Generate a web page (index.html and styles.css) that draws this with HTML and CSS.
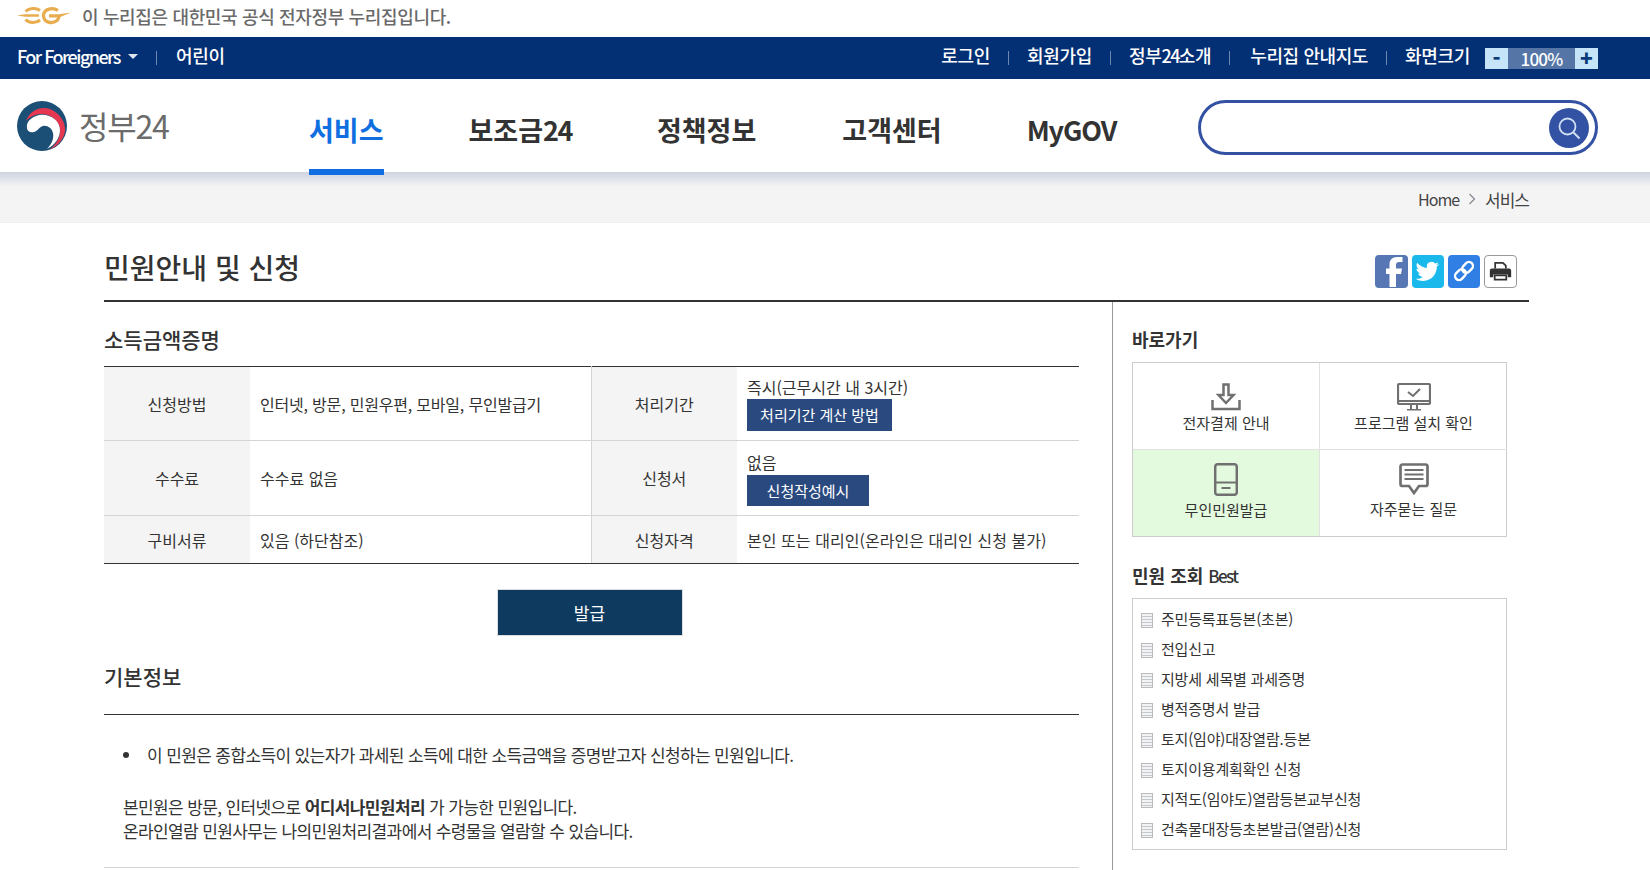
FILE: index.html
```html
<!DOCTYPE html>
<html lang="ko">
<head>
<meta charset="utf-8">
<title>정부24</title>
<link rel="stylesheet" href="styles.css">
</head>
<body>
<div class="gov-bar">
  <svg class="eg" viewBox="0 0 54 18" width="54" height="18"><path d="M0 8.500l8-1.300h14v2.600H8z" fill="#e9ac4e"/><path d="M23 3.500C19 .5 12 1 8.500 4.500M8.500 12.500C12 16.500 19 16.500 23 13" fill="none" stroke="#e9ac4e" stroke-width="3"/><path d="M41 3.500C36 .2 27 1.500 26.500 8.500 26.500 15.500 35 17.500 40 13.500 41.500 12 42 10.500 42 9" fill="none" stroke="#e9ac4e" stroke-width="3.200"/><path d="M32 7.300h10L54 5.500 42 10.500H32z" fill="#e9ac4e"/></svg>
  <span>이 누리집은 대한민국 공식 전자정부 누리집입니다.</span>
</div>
<div class="util-bar">
  <div class="util-left">
    <a class="foreign">For Foreigners<i class="caret"></i></a>
    <i class="sep sep-wide"></i>
    <a>어린이</a>
  </div>
  <div class="util-right">
    <a>로그인</a><i class="sep"></i>
    <a>회원가입</a><i class="sep"></i>
    <a>정부<span class="tight">24</span>소개</a><i class="sep sep-map"></i>
    <a>누리집 안내지도</a><i class="sep"></i>
    <a>화면크기</a>
    <div class="zoom-ctl"><b>-</b><span>100%</span><b>+</b></div>
  </div>
</div>
<header class="head">
  <div class="logo">
    <svg viewBox="0 0 50 50" width="50" height="50">
      <circle cx="25" cy="25" r="25" fill="#1b4f75"/>
      <path d="M9 20C13 9 24 5 33 8c10 4 16 14 15 22-1 8-7 15-16 19 8-6 12-14 11-21C41 17 31 12 23 13c-7 1-11 4-14 7z" fill="#e5374f"/>
      <path d="M10 27c-1-6 4-11 12-13 10-2 21 5 21 15 0 8-5 15-13 19 5-5 7-11 6-16-1-5-6-8-10-7-4 1-5 5-9 6-4 1-7-1-7-4z" fill="#fff"/>
    </svg>
    <span>정부24</span>
  </div>
  <nav class="gnb">
    <a class="on">서비스</a>
    <a>보조금<span class="n24">24</span></a>
    <a>정책정보</a>
    <a class="cs">고객센터</a>
    <a class="en">MyGOV</a>
  </nav>
  <div class="search">
    <span class="search-btn">
      <svg viewBox="0 0 24 24" width="24" height="24"><circle cx="10.500" cy="10.500" r="8" fill="none" stroke="#cfe0f5" stroke-width="1.800"/><path d="M16.500 16.500l6 6" stroke="#cfe0f5" stroke-width="2"/></svg>
    </span>
  </div>
</header>
<div class="crumb">
  <span>Home</span>
  <svg viewBox="0 0 8 12" width="8" height="12"><path d="M1.500 1l5 5-5 5" fill="none" stroke="#8a8590" stroke-width="1.200"/></svg>
  <span class="crumb-now">서비스</span>
</div>
<main class="page">
  <div class="title-row">
    <h1>민원안내 및 신청</h1>
    <div class="share">
      <span class="sq fb"><svg viewBox="0 0 32 32" width="32" height="32"><path d="M21 32V19h5l1-5.500h-6V10c0-2 1-3 3-3h3.500V2h-5c-5.500 0-8 3-8 7.500v4H11V19h3.500v13z" fill="#fff"/></svg></span>
      <span class="sq tw"><svg viewBox="0 0 32 32" width="32" height="32"><path d="M27 9.200c-.9.400-1.800.6-2.800.8 1-.6 1.800-1.500 2.100-2.700-.9.600-2 1-3 1.200a4.800 4.800 0 0 0-8.300 4.400C11.100 12.700 7.500 10.800 5.200 7.800c-1.300 2.200-.6 5 1.500 6.400-.8 0-1.500-.2-2.200-.6 0 2.300 1.700 4.300 3.900 4.800-.7.200-1.500.2-2.200.1.600 2 2.400 3.300 4.500 3.400-2 1.500-4.500 2.200-7 1.900 2.200 1.400 4.700 2.200 7.400 2.200 9 0 14-7.600 13.700-14.400 1-.7 1.800-1.500 2.400-2.400z" fill="#fff"/></svg></span>
      <span class="sq lk"><svg viewBox="0 0 32 32" width="32" height="32"><g fill="none" stroke="#fff" stroke-width="2.400" transform="rotate(-45 16 16)"><rect x="5" y="12" width="12" height="8" rx="4"/><rect x="15" y="12" width="12" height="8" rx="4"/></g></svg></span>
      <span class="sq pr"><svg viewBox="0 0 32 32" width="31" height="31"><path d="M10.500 13V7h8l3 3v3" fill="none" stroke="#333" stroke-width="1.800"/><path d="M7 13h18a2 2 0 0 1 2 2v7h-3.500v-3h-15v3H5v-7a2 2 0 0 1 2-2z" fill="#333"/><path d="M10 20h12v4.500H10z" fill="none" stroke="#333" stroke-width="1.800"/></svg></span>
    </div>
  </div>
  <div class="cols">
    <section class="content">
      <h2>소득금액증명</h2>
      <table class="info">
        <tr class="r1">
          <th>신청방법</th><td class="w1 narrow">인터넷, 방문, 민원우편, 모바일, 무인발급기</td>
          <th class="th2">처리기간</th><td>즉시(근무시간 내 3시간)<a class="mini m1">처리기간 계산 방법</a></td>
        </tr>
        <tr class="r2">
          <th>수수료</th><td class="w1">수수료 없음</td>
          <th class="th2">신청서</th><td>없음<a class="mini m2">신청작성예시</a></td>
        </tr>
        <tr class="r3">
          <th>구비서류</th><td class="w1">있음 (하단참조)</td>
          <th class="th2">신청자격</th><td class="wide">본인 또는 대리인(온라인은 대리인 신청 불가)</td>
        </tr>
      </table>
      <div class="issue-wrap"><a class="issue">발급</a></div>
      <h2 class="h-basic">기본정보</h2>
      <div class="basic">
        <ul><li>이 민원은 종합소득이 있는자가 과세된 소득에 대한 소득금액을 증명받고자 신청하는 민원입니다.</li></ul>
        <p>본민원은 방문, 인터넷으로 <b>어디서나민원처리</b> 가 가능한 민원입니다.<br>온라인열람 민원사무는 나의민원처리결과에서 수령물을 열람할 수 있습니다.</p>
      </div>
    </section>
    <aside class="side">
      <h3>바로가기</h3>
      <div class="quick">
        <a>
          <svg viewBox="0 0 30 28" width="30" height="28"><path d="M12.500 1.500h5V12h5L15 20 7.500 12h5zM1.500 17v9h27v-9" fill="none" stroke="#707070" stroke-width="2.500"/></svg>
          <span>전자결제 안내</span>
        </a>
        <a>
          <svg viewBox="0 0 34 28" width="34" height="28"><rect x="1" y="1" width="32" height="20" rx="1.500" fill="none" stroke="#707070" stroke-width="2.200"/><path d="M1 18h32M11 9l5 4 7-7" fill="none" stroke="#707070" stroke-width="2"/><path d="M13 21h2v5h4v-5h2v5h3v1.500H10V26h3z" fill="#707070"/></svg>
          <span>프로그램 설치 확인</span>
        </a>
        <a class="green">
          <svg viewBox="0 0 24 33" width="24" height="33"><rect x="1.200" y="1.200" width="21.600" height="30.600" rx="2.500" fill="none" stroke="#707070" stroke-width="2.500"/><path d="M1.200 19.500h21.600M7.500 25h9" fill="none" stroke="#707070" stroke-width="2.200"/></svg>
          <span>무인민원발급</span>
        </a>
        <a>
          <svg viewBox="0 0 30 32" width="30" height="32"><path d="M3.500 1.500h23a2 2 0 0 1 2 2V21a2 2 0 0 1-2 2H20l-5 7-5-7H3.500a2 2 0 0 1-2-2V3.500a2 2 0 0 1 2-2z" fill="none" stroke="#707070" stroke-width="2.700"/><path d="M5.500 7h19M5.500 11.500h19M5.500 16h19" stroke="#707070" stroke-width="2.200"/></svg>
          <span>자주묻는 질문</span>
        </a>
      </div>
      <h3 class="h-best">민원 조회 <em>Best</em></h3>
      <ul class="best">
        <li>주민등록표등본(초본)</li>
        <li>전입신고</li>
        <li>지방세 세목별 과세증명</li>
        <li>병적증명서 발급</li>
        <li>토지(임야)대장열람.등본</li>
        <li>토지이용계획확인 신청</li>
        <li>지적도(임야도)열람등본교부신청</li>
        <li>건축물대장등초본발급(열람)신청</li>
      </ul>
    </aside>
  </div>
</main>
</body>
</html>
```
FILE: styles.css
```css
* { box-sizing: border-box; }
html, body { margin: 0; padding: 0; height: 870px; overflow: hidden; background: #fff; }
body { font-family: "Noto Sans CJK KR", "Noto Sans", sans-serif; color: #333; font-size: 16px; }
h1, h2, h3, ul, p { margin: 0; padding: 0; }
i, em { font-style: normal; }

.gov-bar { height: 37px; display: flex; align-items: center; padding: 0 0 5px 17px; gap: 11px; font-size: 18px; color: #6a6a6a; font-weight: 500; }
.gov-bar span { letter-spacing: -.35px; }
.eg { flex: none; }

.util-bar { height: 42px; background: #033074; color: #fff; display: flex; justify-content: space-between; align-items: center; padding: 0 52px 0 17px; font-size: 18px; font-weight: 500; }
.util-left, .util-right { display: flex; align-items: center; }
.util-left a, .util-right a { position: relative; top: -3px; letter-spacing: -.3px; }
.foreign { font-size: 18px; letter-spacing: -1.55px !important; display: flex; align-items: center; top: -2px !important; }
.tight { letter-spacing: -1.6px; }
.caret { width: 0; height: 0; border-left: 5px solid transparent; border-right: 5px solid transparent; border-top: 5px solid #dfe5f0; margin-left: 8px; }
.sep { width: 1px; height: 14px; background: #6f88ad; margin: 0 18px; }
.sep-wide { margin: 0 19px 0 18px; }
.sep-map { margin-right: 20px; }
.zoom-ctl { display: flex; height: 21px; margin-left: 15px; width: 113px; font-weight: 700; }
.zoom-ctl b { width: 23px; background: #c5e4f8; color: #0b3a78; text-align: center; font-size: 21px; line-height: 19px; }
.zoom-ctl span { flex: 1; background: #5475a5; text-align: center; font-size: 17px; font-weight: 500; line-height: 21px; letter-spacing: -.8px; }
.util-right a:nth-of-type(4) { letter-spacing: -.42px; }

.head { height: 93px; display: flex; position: relative; align-items: center; background: #fff; padding-left: 17px; z-index: 1; }
.logo { display: flex; align-items: center; width: 292px; gap: 12px; color: #6b6b6b; font-size: 32px; }
.logo span { letter-spacing: -1.2px; position: relative; top: -1px; }
.gnb { display: flex; gap: 85px; font-size: 27px; font-weight: 700; color: #333; margin-top: 7px; }
.gnb a { position: relative; white-space: nowrap; }
.gnb a.on { color: #0f6fe0; }
.gnb a.on::after { content: ""; position: absolute; left: 0; right: 0; bottom: -26px; height: 6px; background: #0f6fe0; }
.n24 { letter-spacing: -1.5px; }
.cs { margin-left: 1px; }
.en { letter-spacing: -1.1px; }
.search { position: absolute; left: 1198px; top: 21px; width: 400px; height: 55px; border: 3px solid #3452a4; border-radius: 28px; display: flex; align-items: center; justify-content: flex-end; padding-right: 6px; }
.search-btn { width: 40px; height: 40px; border-radius: 50%; background: #3452a4; display: flex; align-items: center; justify-content: center; }

.crumb { height: 51px; background: linear-gradient(#cdd3e0, #f5f4f5 15px); border-bottom: 1px solid #efefef; display: flex; align-items: center; justify-content: flex-end; padding: 4px 121px 0 0; gap: 9px; font-size: 16px; color: #444; }
.crumb span { letter-spacing: -1px; }
.crumb-now { font-size: 17px; }

.page { width: 1425px; margin-left: 104px; }
.title-row { height: 79px; display: flex; justify-content: space-between; border-bottom: 2px solid #333; padding-top: 23px; }
h1 { font-size: 28px; font-weight: 500; line-height: 44px; color: #333; margin-top: -1px; }
.share { display: flex; gap: 4px; padding: 9px 12px 0 0; }
.sq { width: 33px; height: 33px; border-radius: 4px; display: block; }
.sq svg { display: block; }
.fb { background: #5776b4; }
.tw { background: #1bb8ec; width: 32px; }
.lk { background: #2f7fe4; width: 32px; }
.pr { border: 1px solid #999; background: #fff; }

.cols { display: flex; }
.content { width: 1009px; padding-right: 33px; border-right: 1px solid #999; height: 568px; }
h2 { font-size: 21px; font-weight: 500; color: #333; line-height: 30px; margin-top: 22px; }
.info { width: 975px; border-collapse: collapse; margin-top: 12px; border-top: 1px solid #333; border-bottom: 1px solid #333; table-layout: fixed; }
.info th, .info td { font-weight: 400; font-size: 16px; line-height: 22px; padding: 0; vertical-align: middle; border-bottom: 1px solid #d4d4d4; color: #333; }
.info tr:last-child th, .info tr:last-child td { border-bottom: 1px solid #333; }
.info th { width: 146px; background: #f4f4f4; text-align: center; }
.info td { padding-left: 10px; }
.info .w1 { width: 341px; padding-left: 10px; }
.info .narrow { letter-spacing: -.2px; }
.info .wide { letter-spacing: .05px; }
.info .th2 { border-left: 1px solid #d4d4d4; }
.r1 { height: 74px; }
.r2 { height: 75px; }
.r3 { height: 48px; }
.mini { display: block; background: #2a4a7f; color: #fff; font-size: 15px; text-align: center; height: 32px; line-height: 31px; }
.m1 { width: 145px; margin-top: 1px; }
.m2 { width: 122px; height: 31px; margin-top: 2px; }

.issue-wrap { display: flex; justify-content: center; margin-top: 25px; padding-right: 4px; }
.issue { width: 186px; height: 47px; background: #0f3a60; border: 1px solid #ddd; color: #fff; display: flex; align-items: center; justify-content: center; font-size: 17px; }
.h-basic { margin-top: 25px; }
.basic { margin-top: 23px; border-top: 1px solid #333; border-bottom: 1px solid #d4d4d4; height: 154px; padding: 28px 0 0 19px; font-size: 17px; line-height: 24px; color: #333; letter-spacing: -.62px; }
.basic ul { padding-left: 24px; margin-bottom: 28px; list-style: none; }
.basic li { position: relative; }
.basic li::before { content: ""; position: absolute; left: -24px; top: 9px; width: 6px; height: 6px; border-radius: 50%; background: #333; }
.basic b { font-weight: 700; }

.side { padding: 22px 0 0 19px; width: 395px; }
h3 { font-size: 18px; font-weight: 700; line-height: 30px; color: #333; }
h3 em { font-weight: 500; font-size: 17px; letter-spacing: -1.6px; }
.quick { display: grid; grid-template-columns: 187px 187px; grid-template-rows: 87px 86px; margin-top: 8px; width: 375px; border: 1px solid #ccc; }
.quick a { display: flex; flex-direction: column; align-items: center; justify-content: flex-start; padding-top: 20px; font-size: 15px; line-height: 22px; color: #333; border-right: 1px solid #e2e2e2; border-bottom: 1px solid #e2e2e2; }
.quick a:nth-child(2n) { border-right: 0; }
.quick a:nth-child(n+3) { border-bottom: 0; padding-top: 13px; }
.quick svg { display: block; margin-bottom: 1px; flex: none; }
.quick a:nth-child(n+3) svg { margin-bottom: 3px; }
.quick a.green { background: #e3fadf; }
.h-best { margin-top: 23px; }
.best { list-style: none; margin-top: 7px; width: 375px; height: 252px; border: 1px solid #ccc; padding: 5px 0 0 8px; font-size: 15px; }
.best li { height: 30px; line-height: 30px; padding-left: 20px; position: relative; letter-spacing: -.2px; }
.best li::before { content: ""; position: absolute; left: 0; top: 9px; width: 10px; height: 13px; background: repeating-linear-gradient(#f3f3f3 0 2px, #c4c8d0 2px 3px); border: 1px solid #bbb; }
```
